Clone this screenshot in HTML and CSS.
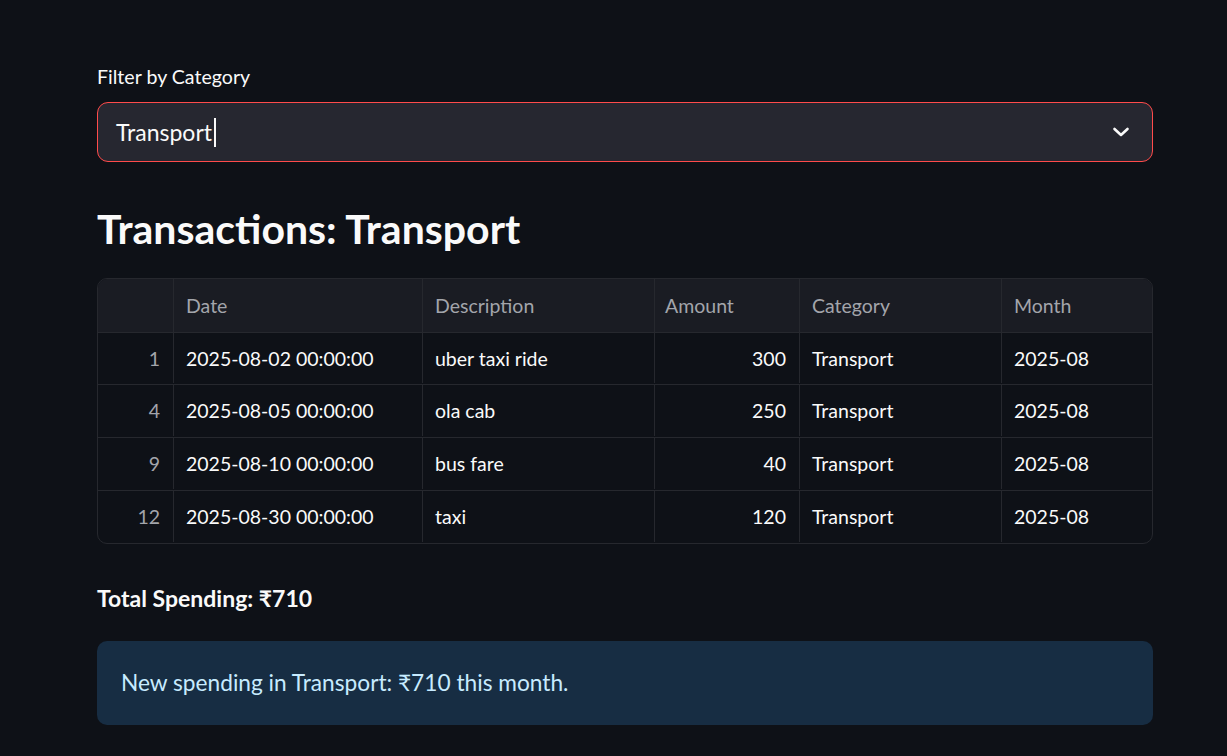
FILE: index.html
```html
<!DOCTYPE html>
<html lang="en">
<head>
<meta charset="utf-8">
<title>Transactions</title>
<link rel="stylesheet" href="styles.css">
</head>
<body>
<main class="page">
  <label class="field-label">Filter by Category</label>
  <div class="select">
    <span class="select-value">Transport</span><span class="caret"></span>
    <svg class="chevron" width="18" height="12" viewBox="0 0 18 12"><path d="M2.5 3 L9 9 L15.5 3" fill="none" stroke="#fafafa" stroke-width="2.6" stroke-linecap="round" stroke-linejoin="round"/></svg>
  </div>

  <h2 class="heading">Transactions: Transport</h2>

  <div class="table">
    <div class="row head">
      <div class="cell idx"></div>
      <div class="cell c-date">Date</div>
      <div class="cell c-desc">Description</div>
      <div class="cell c-amt">Amount</div>
      <div class="cell c-cat">Category</div>
      <div class="cell c-month">Month</div>
    </div>
    <div class="row r1">
      <div class="cell idx num">1</div>
      <div class="cell c-date">2025-08-02 00:00:00</div>
      <div class="cell c-desc">uber taxi ride</div>
      <div class="cell c-amt num">300</div>
      <div class="cell c-cat">Transport</div>
      <div class="cell c-month">2025-08</div>
    </div>
    <div class="row r2">
      <div class="cell idx num">4</div>
      <div class="cell c-date">2025-08-05 00:00:00</div>
      <div class="cell c-desc">ola cab</div>
      <div class="cell c-amt num">250</div>
      <div class="cell c-cat">Transport</div>
      <div class="cell c-month">2025-08</div>
    </div>
    <div class="row r3">
      <div class="cell idx num">9</div>
      <div class="cell c-date">2025-08-10 00:00:00</div>
      <div class="cell c-desc">bus fare</div>
      <div class="cell c-amt num">40</div>
      <div class="cell c-cat">Transport</div>
      <div class="cell c-month">2025-08</div>
    </div>
    <div class="row r4 last">
      <div class="cell idx num">12</div>
      <div class="cell c-date">2025-08-30 00:00:00</div>
      <div class="cell c-desc">taxi</div>
      <div class="cell c-amt num">120</div>
      <div class="cell c-cat">Transport</div>
      <div class="cell c-month">2025-08</div>
    </div>
  </div>

  <p class="total">Total Spending: ₹710</p>

  <div class="info">New spending in Transport: ₹710 this month.</div>
</main>
</body>
</html>
```

FILE: styles.css
```css
* { box-sizing: border-box; }
html, body {
  margin: 0;
  padding: 0;
  background: #0e1117;
  color: #fafafa;
  font-family: Lato, "Noto Sans", sans-serif;
  height: 100%;
  overflow: hidden;
}
.page {
  width: 1056px;
  margin-left: 97px;
  padding-top: 65px;
  display: flex;
  flex-direction: column;
}
.field-label {
  display: block;
  font-size: 19.6px;
  line-height: 24px;
  height: 24px;
  margin-bottom: 13px;
  color: #fafafa;
}
.select {
  height: 60px;
  background: #262730;
  border: 1px solid #ff4b4b;
  border-radius: 11px;
  display: flex;
  align-items: center;
  padding-left: 18px;
  padding-right: 22px;
}
.select-value {
  font-size: 23px;
  color: #fafafa;
}
.caret {
  display: inline-block;
  width: 2px;
  height: 29px;
  background: #fafafa;
  margin-left: 2px;
}
.chevron {
  margin-left: auto;
}
.heading {
  margin: 42px 0 0;
  font-size: 41px;
  font-weight: 700;
  line-height: 50px;
  height: 50px;
}
.table {
  margin-top: 24px;
  border: 1px solid #26282e;
  border-radius: 10px;
  overflow: hidden;
  font-size: 19.5px;
}
.row {
  display: flex;
  height: 53px;
  border-bottom: 1px solid #26282e;
  padding-bottom: 1px;
}
.row.head {
  height: 54px;
  background: #1a1c23;
  color: #a3a5ab;
  padding-bottom: 0;
}
.row.r1 { height: 52px; }
.row.last { border-bottom: none; height: 52px; }
.cell {
  display: flex;
  align-items: center;
  padding: 0 12px;
  border-right: 1px solid #26282e;
  white-space: nowrap;
}
.cell:last-child { border-right: none; }
.idx { width: 76px; justify-content: flex-end; color: #a3a5ab; padding-right: 13px; }
.c-date { width: 249px; padding-left: 12px; }
.c-desc { width: 232px; }
.c-amt { width: 145px; }
.c-cat { width: 202px; padding-left: 12px; }
.c-month { flex: 1; }
.num { justify-content: flex-end; padding-right: 13px; }
.head .c-amt { justify-content: flex-start; padding-left: 10px; }
.total {
  margin: 39px 0 0;
  font-size: 23px;
  font-weight: 700;
  line-height: 30px;
}
.info {
  margin-top: 28px;
  height: 84px;
  background: #172d43;
  color: #c7ebff;
  border-radius: 10px;
  display: flex;
  align-items: center;
  padding-left: 24px;
  padding-bottom: 2px;
  font-size: 22.7px;
}
```
